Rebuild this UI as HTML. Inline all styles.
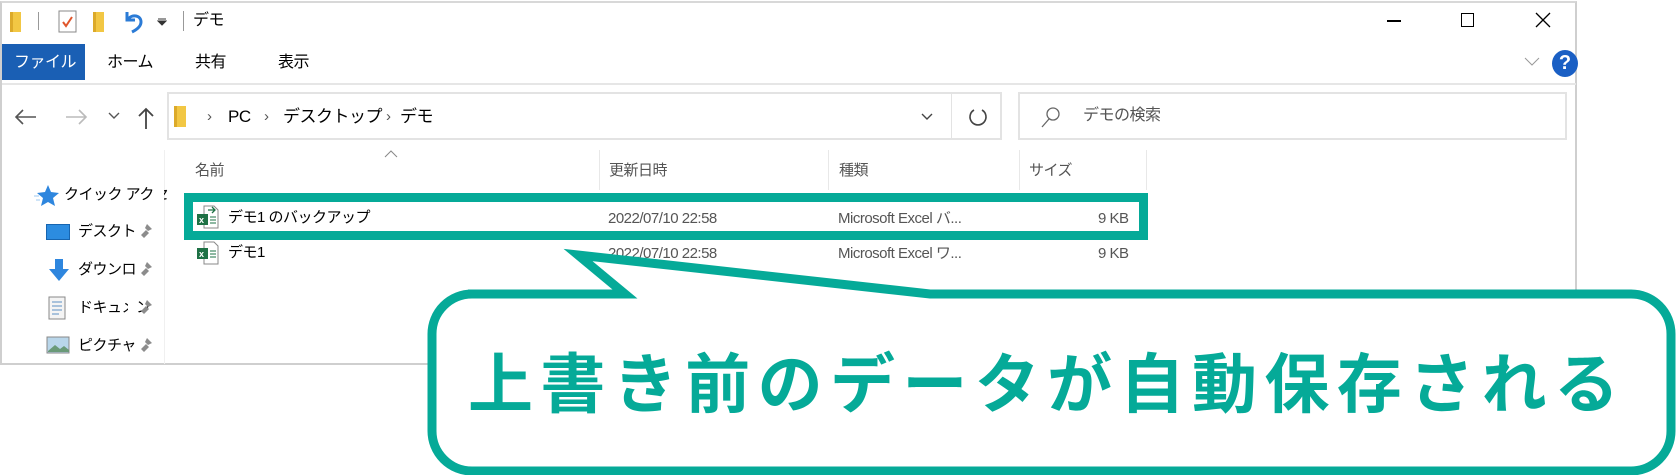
<!DOCTYPE html>
<html><head><meta charset="utf-8"><style>
*{margin:0;padding:0;box-sizing:border-box}
body{width:1676px;height:475px;background:#fff;position:relative;overflow:hidden;font-family:"Liberation Sans","Noto Sans CJK JP",sans-serif;color:#000}
.a{position:absolute;white-space:nowrap}
.ui{font-size:15px;letter-spacing:-0.5px;line-height:1}
.g{color:#555}
</style></head><body>
<!-- window -->
<div class="a" style="left:0;top:1px;width:1577px;height:364px;border:2px solid #cfcfcf;border-top:2px solid #d8d8d8"></div>
<!-- title bar icons -->
<div class="a" style="left:10px;top:12px;width:11px;height:20px;background:#f2c744;border-left:3px solid #dcaa2a"></div>
<div class="a" style="left:38px;top:12px;width:1px;height:18px;background:#999"></div>
<svg class="a" style="left:58px;top:10px" width="20" height="24"><rect x="1" y="1" width="17" height="21" fill="#fff" stroke="#888"/><path d="M5 12l3 4 6-9" stroke="#e0562c" stroke-width="2" fill="none"/></svg>
<div class="a" style="left:93px;top:12px;width:11px;height:20px;background:#f2c744;border-left:3px solid #dcaa2a"></div>
<svg class="a" style="left:122px;top:9px" width="24" height="26"><path d="M5 3v8h8" stroke="#2b7bd6" stroke-width="3" fill="none"/><path d="M6 10c4-5 13-4 13 3 0 5-5 8-9 10" stroke="#2b7bd6" stroke-width="3" fill="none"/></svg>
<svg class="a" style="left:157px;top:18px" width="10" height="8"><path d="M1 1h8M1 3l4 4 4-4z" stroke="#333" fill="#333"/></svg>
<div class="a" style="left:183px;top:11px;width:1px;height:20px;background:#999"></div>
<div class="a ui" style="left:193px;top:13px;font-size:16px">デモ</div>
<!-- window buttons -->
<div class="a" style="left:1387px;top:20px;width:14px;height:1.5px;background:#000"></div>
<div class="a" style="left:1461px;top:13px;width:13px;height:14px;border:1.5px solid #000"></div>
<svg class="a" style="left:1535px;top:12px" width="16" height="16"><path d="M1 1l14 14M15 1L1 15" stroke="#000" stroke-width="1.3"/></svg>
<!-- ribbon tabs -->
<div class="a" style="left:2px;top:44px;width:83px;height:36px;background:#1a5fb4"></div>
<div class="a ui" style="left:14px;top:55px;color:#fff;font-size:16px">ファイル</div>
<div class="a ui" style="left:107px;top:55px;font-size:16px">ホーム</div>
<div class="a ui" style="left:195px;top:55px;font-size:16px">共有</div>
<div class="a ui" style="left:278px;top:55px;font-size:16px">表示</div>
<svg class="a" style="left:1524px;top:57px" width="16" height="10"><path d="M1 1l7 7 7-7" stroke="#999" fill="none"/></svg>
<div class="a" style="left:1552px;top:50px;width:26px;height:27px;border-radius:50%;background:#1a5fc4;color:#fff;font-size:20px;font-weight:bold;text-align:center;line-height:27px">?</div>
<div class="a" style="left:2px;top:83px;width:1574px;height:2px;background:#e6e6e6"></div>
<!-- nav -->
<svg class="a" style="left:14px;top:108px" width="24" height="18"><path d="M22 9H3M9 2L2 9l7 7" stroke="#555" stroke-width="1.6" fill="none"/></svg>
<svg class="a" style="left:64px;top:108px" width="24" height="18"><path d="M2 9h19M15 2l7 7-7 7" stroke="#bbb" stroke-width="1.6" fill="none"/></svg>
<svg class="a" style="left:108px;top:112px" width="12" height="8"><path d="M1 1l5 5 5-5" stroke="#555" stroke-width="1.4" fill="none"/></svg>
<svg class="a" style="left:137px;top:106px" width="18" height="24"><path d="M9 23V3M2 10l7-7 7 7" stroke="#444" stroke-width="1.8" fill="none"/></svg>
<div class="a" style="left:167px;top:92px;width:835px;height:48px;border:2px solid #e3e3e3"></div>
<div class="a" style="left:951px;top:93px;width:1px;height:46px;background:#e3e3e3"></div>
<div class="a" style="left:174px;top:106px;width:12px;height:21px;background:#f2c744;border-left:3px solid #dcaa2a"></div>
<div class="a ui g" style="left:207px;top:109px;font-size:15px">›</div>
<div class="a ui" style="left:228px;top:108px;font-size:17px">PC</div>
<div class="a ui g" style="left:264px;top:109px;font-size:15px">›</div>
<div class="a ui" style="left:283px;top:108px;font-size:17px">デスクトップ</div>
<div class="a ui g" style="left:386px;top:109px;font-size:15px">›</div>
<div class="a ui" style="left:400px;top:108px;font-size:17px">デモ</div>
<svg class="a" style="left:921px;top:113px" width="12" height="8"><path d="M1 1l5 5 5-5" stroke="#444" stroke-width="1.4" fill="none"/></svg>
<svg class="a" style="left:968px;top:106px" width="20" height="22"><path d="M6 4A8 8 0 1 0 14 4" stroke="#444" stroke-width="1.6" fill="none"/></svg>
<div class="a" style="left:1018px;top:92px;width:549px;height:48px;border:2px solid #e3e3e3"></div>
<svg class="a" style="left:1040px;top:105px" width="22" height="24"><circle cx="13" cy="9" r="6" stroke="#666" stroke-width="1.3" fill="none"/><path d="M9 14L2 22" stroke="#666" stroke-width="1.3"/></svg>
<div class="a ui g" style="left:1083px;top:108px;font-size:16px">デモの検索</div>
<!-- nav pane -->
<div class="a" style="left:164px;top:150px;width:1px;height:214px;background:#f0f0f0"></div>
<svg class="a" style="left:34px;top:184px" width="26" height="24"><path d="M14 1l3 7 8 1-6 5 2 8-7-4-7 4 2-8-6-5 8-1z" fill="#2e86de"/><path d="M0 12h5M2 16h4" stroke="#9cc8f0"/></svg>
<div class="a ui" style="left:64px;top:187px">クイック アクセ</div>
<div class="a" style="left:154px;top:182px;width:10px;height:24px;background:#fff"></div>
<div class="a" style="left:46px;top:224px;width:24px;height:16px;background:#2c8ce0;border:1px solid #1765b0"></div>
<div class="a ui" style="left:78px;top:224px">デスクト</div>
<div class="a" style="left:48px;top:258px;width:22px;height:24px"><svg width="22" height="24"><path d="M7 1h8v10h6L11 23 1 11h6z" fill="#2e86de"/></svg></div>
<div class="a ui" style="left:78px;top:262px">ダウンロ</div>
<svg class="a" style="left:48px;top:296px" width="18" height="24"><rect x="1" y="1" width="16" height="22" fill="#f4f4f4" stroke="#888"/><path d="M4 6h10M4 10h10M4 14h10M4 18h7" stroke="#5c8fc4"/></svg>
<div class="a ui" style="left:78px;top:300px">ドキュメン</div>
<div class="a" style="left:128px;top:296px;width:10px;height:24px;background:#fff"></div>
<svg class="a" style="left:46px;top:336px" width="24" height="18"><rect x="1" y="1" width="22" height="16" fill="#b9d6ea" stroke="#888"/><path d="M2 15l7-6 5 4 4-3 5 4v2H2z" fill="#6a9a78"/></svg>
<div class="a ui" style="left:78px;top:338px">ピクチャ</div>
<svg class="a" style="left:138px;top:220px" width="16" height="140"><g fill="#8c8c8c"><path d="M3 15l5-5 3 3-5 5zM9 4l5 5-4 2-3-3z"/><path d="M3 53l5-5 3 3-5 5zM9 42l5 5-4 2-3-3z"/><path d="M3 91l5-5 3 3-5 5zM9 80l5 5-4 2-3-3z"/><path d="M3 129l5-5 3 3-5 5zM9 118l5 5-4 2-3-3z"/></g></svg>
<!-- headers -->
<svg class="a" style="left:384px;top:150px" width="14" height="8"><path d="M1 7l6-6 6 6" stroke="#888" fill="none"/></svg>
<div class="a ui g" style="left:195px;top:163px">名前</div>
<div class="a" style="left:599px;top:150px;width:1px;height:40px;background:#e8e8e8"></div>
<div class="a ui g" style="left:609px;top:163px">更新日時</div>
<div class="a" style="left:828px;top:150px;width:1px;height:40px;background:#e8e8e8"></div>
<div class="a ui g" style="left:839px;top:163px">種類</div>
<div class="a" style="left:1019px;top:150px;width:1px;height:40px;background:#e8e8e8"></div>
<div class="a ui g" style="left:1029px;top:163px">サイズ</div>
<div class="a" style="left:1146px;top:150px;width:1px;height:40px;background:#e8e8e8"></div>
<!-- rows -->
<div class="a" style="left:184px;top:193px;width:964px;height:47px;border:9px solid #05aa98"></div>
<svg class="a" style="left:196px;top:204px" width="24" height="26"><path d="M8 2h10l4 4v18H8z" fill="#fff" stroke="#888"/><path d="M12 6h7M16 3l3 3-3 3" stroke="#1e7145" stroke-width="1.3" fill="none"/><rect x="1" y="10" width="11" height="11" fill="#1e7145"/><text x="3" y="19" font-size="9" fill="#fff" font-weight="bold" font-family="Liberation Sans">x</text><path d="M14 13h6M14 16h6M14 19h6" stroke="#1e7145"/></svg>
<div class="a ui" style="left:228px;top:210px">デモ1 のバックアップ</div>
<div class="a ui g" style="left:608px;top:211px">2022/07/10 22:58</div>
<div class="a ui g" style="left:838px;top:211px">Microsoft Excel バ...</div>
<div class="a ui g" style="left:1098px;top:211px">9 KB</div>
<svg class="a" style="left:196px;top:240px" width="24" height="26"><path d="M8 2h10l4 4v18H8z" fill="#fff" stroke="#888"/><rect x="1" y="8" width="11" height="11" fill="#1e7145"/><text x="3" y="17" font-size="9" fill="#fff" font-weight="bold" font-family="Liberation Sans">x</text><path d="M14 11h6M14 14h6M14 17h6" stroke="#1e7145"/></svg>
<div class="a ui" style="left:228px;top:245px">デモ1</div>
<div class="a ui g" style="left:608px;top:246px">2022/07/10 22:58</div>
<div class="a ui g" style="left:838px;top:246px">Microsoft Excel ワ...</div>
<div class="a ui g" style="left:1098px;top:246px">9 KB</div>
<!-- callout -->
<svg class="a" style="left:0;top:0" width="1676" height="475">
<path d="M468 294 H625 L578 255 L930 294 H1631 A40 40 0 0 1 1671 334 V431 A40 40 0 0 1 1631 471 H472 A40 40 0 0 1 432 431 V334 A40 40 0 0 1 472 294 Z" fill="#fff" stroke="#05aa98" stroke-width="9" stroke-linejoin="miter"/>
</svg>
<div class="a" style="left:468px;top:334px;font-size:65px;font-weight:bold;color:#05aa98;letter-spacing:7.4px;line-height:90px;font-family:'Noto Sans CJK JP',sans-serif">上書き前のデータが自動保存される</div>
</body></html>
